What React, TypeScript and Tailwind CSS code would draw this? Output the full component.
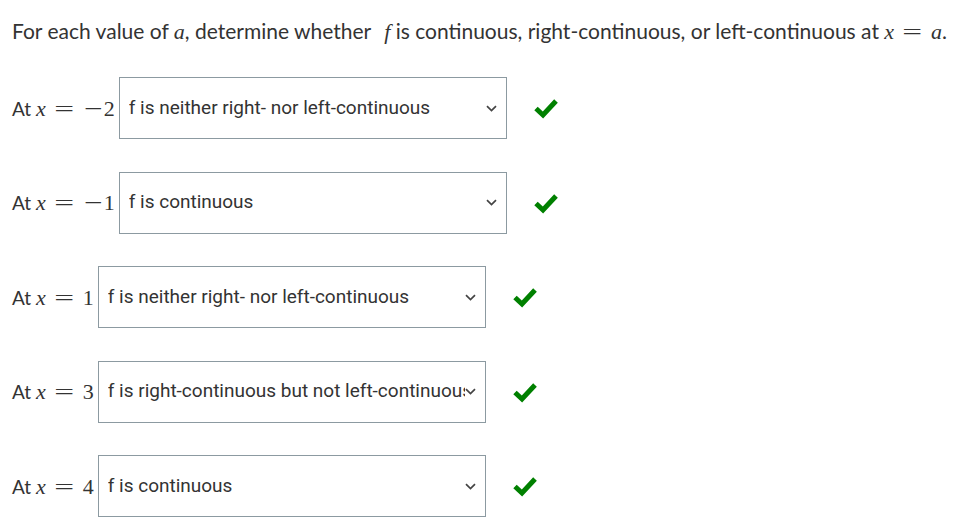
import React from "react";

const rows = [
  { neg: true, n: "2", answer: "f is neither right- nor left-continuous" },
  { neg: true, n: "1", answer: "f is continuous" },
  { neg: false, n: "1", answer: "f is neither right- nor left-continuous" },
  { neg: false, n: "3", answer: "f is right-continuous but not left-continuous" },
  { neg: false, n: "4", answer: "f is continuous" },
];

function M({ children }: { children: React.ReactNode }) {
  return (
    <span className="font-['Liberation_Serif',serif] text-[22px]">{children}</span>
  );
}

function Eq() {
  return (
    <span className="inline-block w-[37px] text-center">
      <span className="inline-block scale-x-[1.6]">=</span>
    </span>
  );
}

function Chevron() {
  return (
    <svg width="11" height="7" viewBox="0 0 11 7" className="shrink-0">
      <path d="M1 1.2 L5.5 5.6 L10 1.2" fill="none" stroke="#444" strokeWidth="1.7" />
    </svg>
  );
}

function Check() {
  return (
    <svg width="26" height="22" viewBox="0 0 26 22">
      <path d="M3 11.5 L10 18 L23 4" fill="none" stroke="#008000" strokeWidth="5" />
    </svg>
  );
}

export default function App() {
  return (
    <div className="min-h-screen bg-white pl-3 pt-[17px] text-[#333] font-['Lato','Noto_Sans',sans-serif]">
      <p className="text-[21px] leading-[28px] whitespace-nowrap">
        For each value of <M><i>a</i></M>, determine whether{" "}
        <M><i className="ml-2">f</i></M> is continuous, right-continuous, or left-continuous at{" "}
        <M>
          <i>x</i>
          <Eq />
          <i>a</i>
        </M>
        .
      </p>

      <div className="mt-[31px] flex flex-col gap-[32.5px]">
        {rows.map((r, i) => (
          <div key={i} className="flex items-center">
            <span className="text-[19px] whitespace-nowrap">
              At{" "}
              <M>
                <i>x</i>
                <Eq />
                {r.neg && (
                  <span className="inline-block w-[21px] text-center">
                    <span className="inline-block scale-x-[1.5]">−</span>
                  </span>
                )}
                {r.n}
              </M>
            </span>
            <div className="ml-[4px] flex h-[62px] w-[388px] items-center border border-[#8c9aa1] bg-white pl-[9px] pr-[9px]">
              <span className="flex-1 overflow-hidden whitespace-nowrap font-['Roboto',sans-serif] text-[19px] text-[#333]">
                {r.answer}
              </span>
              <Chevron />
            </div>
            <div className="ml-[26px]">
              <Check />
            </div>
          </div>
        ))}
      </div>
    </div>
  );
}
